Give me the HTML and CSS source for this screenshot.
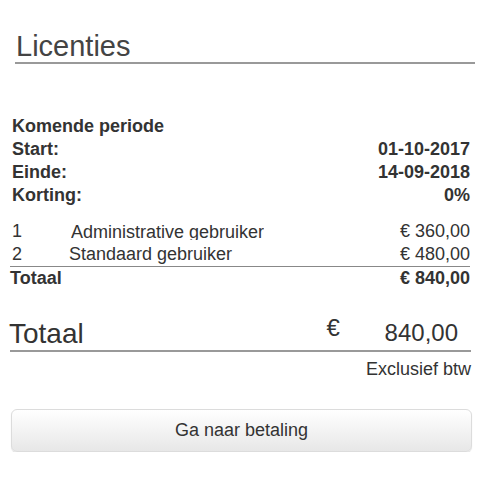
FILE: index.html
```html
<!DOCTYPE html>
<html lang="nl">
<head>
<meta charset="utf-8">
<title>Licenties</title>
<link rel="stylesheet" href="styles.css">
</head>
<body>
<div class="page">
  <h1 class="title">Licenties</h1>

  <section class="period">
    <div class="period-head">Komende periode</div>
    <div class="kv"><span>Start:</span><span>01-10-2017</span></div>
    <div class="kv"><span>Einde:</span><span>14-09-2018</span></div>
    <div class="kv"><span>Korting:</span><span>0%</span></div>
  </section>

  <section class="lines">
    <div class="line">
      <span class="qty">1</span>
      <span class="name name-a"><span class="clip">Administrative gebruiker</span></span>
      <span class="amount">€ 360,00</span>
    </div>
    <div class="line last">
      <span class="qty">2</span>
      <span class="name">Standaard gebruiker</span>
      <span class="amount">€ 480,00</span>
    </div>
    <div class="line total">
      <span class="name-total">Totaal</span>
      <span class="amount">€ 840,00</span>
    </div>
  </section>

  <section class="grand">
    <div class="grand-row">
      <span class="grand-label">Totaal</span>
      <span class="grand-cur">€</span>
      <span class="grand-amount">840,00</span>
    </div>
    <div class="vat">Exclusief btw</div>
  </section>

  <button class="pay" type="button">Ga naar betaling</button>
</div>
</body>
</html>
```

FILE: styles.css
```css
html, body {
  margin: 0;
  padding: 0;
  background: #fff;
}
body {
  font-family: "Liberation Sans", Arial, sans-serif;
  color: #333;
  font-size: 18px;
}
.page {
  width: 497px;
  padding-top: 30px;
}
.title {
  margin: 0 22px 0 15px;
  padding-left: 1px;
  font-size: 29px;
  font-weight: normal;
  line-height: 32px;
  color: #444;
  border-bottom: 2px solid #999;
}
.period {
  margin: 51px 27px 0 12px;
  line-height: 23px;
  font-weight: bold;
  color: #333;
}
.period-head {
  font-size: 18px;
}
.kv {
  display: flex;
  justify-content: space-between;
}
.lines {
  margin: 13px 27px 0 10px;
  line-height: 23px;
}
.line {
  display: flex;
  align-items: flex-start;
}
.line.last {
  border-bottom: 1px solid #888;
}
.qty {
  width: 57px;
  padding-left: 2px;
}
.name {
  flex: 1;
}
.name-a {
  padding-left: 2px;
}
.clip {
  display: inline-block;
  height: 19px;
  overflow: hidden;
  vertical-align: top;
  margin-top: 1px;
}
.amount {
  text-align: right;
}
.total {
  font-weight: bold;
  justify-content: space-between;
  line-height: 22px;
}
.grand {
  margin: 25px 26px 0 10px;
}
.grand-row {
  display: flex;
  align-items: flex-end;
  border-bottom: 2px solid #999;
}
.grand-label {
  flex: 1;
  font-size: 28px;
  line-height: 32px;
  margin-left: -1px;
}
.grand-cur {
  font-size: 24px;
  line-height: 28px;
  padding-bottom: 8px;
  width: 58px;
}
.grand-amount {
  font-size: 24px;
  line-height: 28px;
  padding-bottom: 3px;
  padding-right: 13px;
}
.vat {
  text-align: right;
  margin-top: 6px;
  line-height: 22px;
}
.pay {
  display: block;
  box-sizing: border-box;
  margin: 29px 0 0 11px;
  width: 461px;
  height: 43px;
  font-family: "Liberation Sans", Arial, sans-serif;
  font-size: 18px;
  color: #333;
  background: linear-gradient(#ffffff, #e7e7e7);
  border: 1px solid #dcdcdc;
  border-radius: 6px;
  box-shadow: 0 1px 1px rgba(0, 0, 0, 0.12);
  padding: 0;
}
```
